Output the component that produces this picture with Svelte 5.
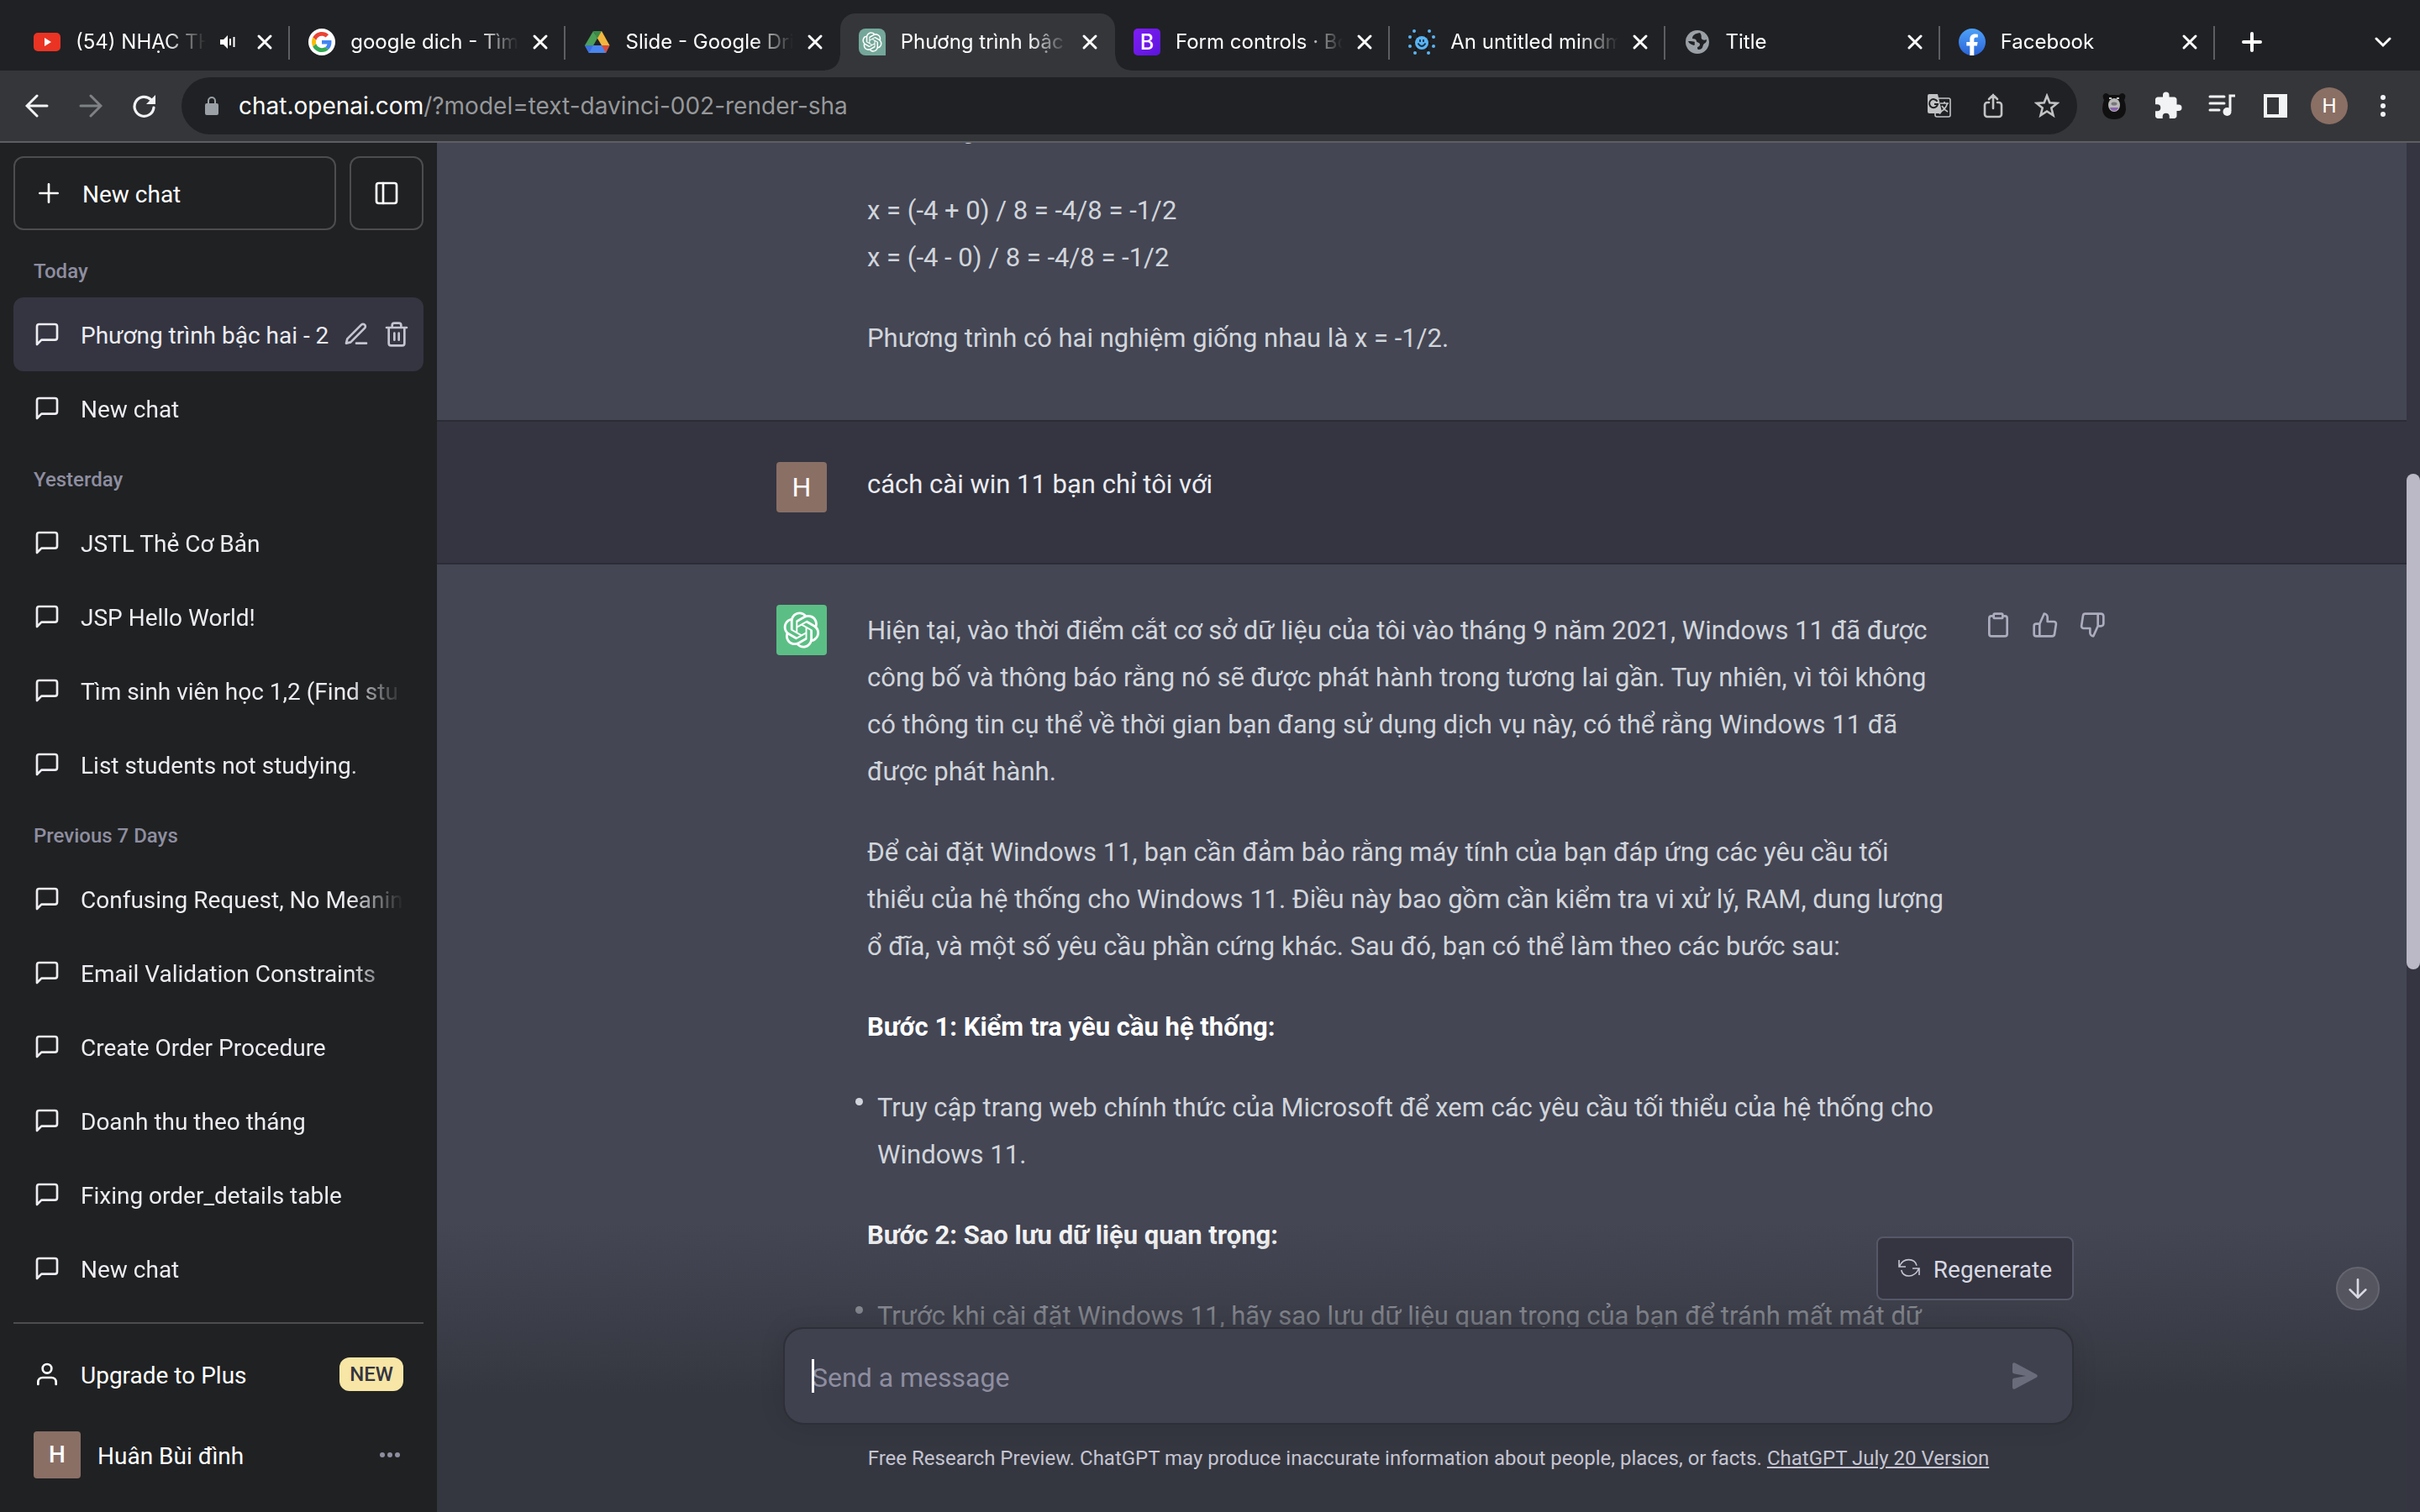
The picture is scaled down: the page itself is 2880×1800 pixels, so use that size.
<script>
  const tabs = [
    { icon: 'youtube', title: '(54) NHẠC TH', audio: true },
    { icon: 'google', title: 'google dich - Tìm' },
    { icon: 'drive', title: 'Slide - Google Dri', flush: true },
    { icon: 'gpt', title: 'Phương trình bậc', active: true },
    { icon: 'bootstrap', title: 'Form controls · Bo' },
    { icon: 'mind', title: 'An untitled mindm' },
    { icon: 'globe', title: 'Title' },
    { icon: 'facebook', title: 'Facebook' },
  ];

  const groups = [
    { label: 'Today', chats: [{ title: 'Phương trình bậc hai - 2', active: true }, { title: 'New chat' }] },
    {
      label: 'Yesterday',
      chats: [
        { title: 'JSTL Thẻ Cơ Bản' },
        { title: 'JSP Hello World!' },
        { title: 'Tìm sinh viên học 1,2 (Find stu' },
        { title: 'List students not studying.' },
      ],
    },
    {
      label: 'Previous 7 Days',
      chats: [
        { title: 'Confusing Request, No Meanin' },
        { title: 'Email Validation Constraints' },
        { title: 'Create Order Procedure' },
        { title: 'Doanh thu theo tháng' },
        { title: 'Fixing order_details table' },
        { title: 'New chat' },
      ],
    },
  ];

  let typedUrl = $state('');
  let draft = $state('');
</script>

{#snippet gptMark()}
  <path d="M37.5324 16.8707C37.9808 15.5241 38.1363 14.0974 37.9886 12.6859C37.8409 11.2744 37.3934 9.91076 36.676 8.68622C35.6126 6.83404 33.9882 5.3676 32.0373 4.4985C30.0864 3.62941 27.9098 3.40259 25.8215 3.85078C24.8796 2.7893 23.7219 1.94125 22.4257 1.36341C21.1295 0.785575 19.7249 0.491269 18.3058 0.500197C16.1708 0.495044 14.0893 1.16803 12.3614 2.42214C10.6335 3.67624 9.34853 5.44666 8.6917 7.47815C7.30085 7.76286 5.98686 8.3414 4.8377 9.17505C3.68854 10.0087 2.73073 11.0782 2.02839 12.312C0.956464 14.1591 0.498905 16.2988 0.721698 18.4228C0.944492 20.5467 1.83612 22.5449 3.268 24.1293C2.81966 25.4759 2.66413 26.9026 2.81182 28.3141C2.95951 29.7256 3.40701 31.0892 4.12437 32.3138C5.18791 34.1659 6.8123 35.6322 8.76321 36.5013C10.7141 37.3704 12.8907 37.5973 14.9789 37.1492C15.9208 38.2107 17.0786 39.0587 18.3747 39.6366C19.6709 40.2144 21.0755 40.5087 22.4946 40.4998C24.6307 40.5054 26.7133 39.8321 28.4418 38.5772C30.1704 37.3223 31.4556 35.5506 32.1119 33.5179C33.5027 33.2332 34.8167 32.6547 35.9659 31.821C37.115 30.9874 38.0728 29.9178 38.7752 28.684C39.8458 26.8371 40.3023 24.6979 40.0789 22.5748C39.8556 20.4517 38.9639 18.4544 37.5324 16.8707ZM22.4978 37.8849C20.7443 37.8874 19.0459 37.2733 17.6994 36.1501C17.7601 36.117 17.8666 36.0586 17.936 36.0161L25.9004 31.4156C26.1003 31.3019 26.2663 31.137 26.3813 30.9378C26.4964 30.7386 26.5563 30.5124 26.5549 30.2825V19.0542L29.9213 20.998C29.9389 21.0068 29.9541 21.0198 29.9656 21.0359C29.977 21.052 29.9842 21.0707 29.9867 21.0902V30.3889C29.9842 32.375 29.1946 34.2791 27.7909 35.6841C26.3872 37.0892 24.4838 37.8806 22.4978 37.8849ZM6.39227 31.0064C5.51397 29.4888 5.19742 27.7107 5.49804 25.9832C5.55718 26.0187 5.66048 26.0818 5.73461 26.1244L13.699 30.7248C13.8975 30.8408 14.1233 30.902 14.3532 30.902C14.583 30.902 14.8088 30.8408 15.0073 30.7248L24.731 25.1103V28.9979C24.7321 29.0177 24.7283 29.0376 24.7199 29.0556C24.7115 29.0736 24.6988 29.0893 24.6829 29.1012L16.6317 33.7497C14.9096 34.7416 12.8643 35.0097 10.9447 34.4954C9.02506 33.9811 7.38785 32.7263 6.39227 31.0064ZM4.29707 13.6194C5.17156 12.0998 6.55279 10.9364 8.19885 10.3327C8.19885 10.4013 8.19491 10.5228 8.19491 10.6071V19.808C8.19351 20.0378 8.25334 20.2638 8.36823 20.4629C8.48312 20.6619 8.64893 20.8267 8.84863 20.9404L18.5723 26.5542L15.206 28.4979C15.1894 28.5089 15.1703 28.5155 15.1505 28.5173C15.1307 28.5191 15.1107 28.516 15.0924 28.5082L7.04046 23.8557C5.32135 22.8601 4.06716 21.2235 3.55289 19.3046C3.03862 17.3858 3.30624 15.3413 4.29707 13.6194ZM31.955 20.0556L22.2312 14.4411L25.5976 12.4981C25.6142 12.4872 25.6333 12.4805 25.6531 12.4787C25.6729 12.4769 25.6928 12.4801 25.7111 12.4879L33.7631 17.1364C34.9967 17.849 36.0017 18.8982 36.6606 20.1613C37.3194 21.4244 37.6047 22.849 37.4832 24.2684C37.3617 25.6878 36.8382 27.0432 35.9743 28.1759C35.1103 29.3086 33.9415 30.1717 32.6047 30.6641C32.6047 30.5947 32.6047 30.4733 32.6047 30.3889V21.188C32.6066 20.9586 32.5474 20.7328 32.4332 20.5338C32.319 20.3348 32.154 20.1698 31.955 20.0556ZM35.3055 15.0128C35.2464 14.9765 35.1431 14.9142 35.069 14.8717L27.1045 10.2712C26.906 10.1554 26.6803 10.0943 26.4504 10.0943C26.2206 10.0943 25.9948 10.1554 25.7963 10.2712L16.0726 15.8858V11.9982C16.0715 11.9783 16.0753 11.9585 16.0837 11.9405C16.0921 11.9225 16.1048 11.9068 16.1207 11.8949L24.1719 7.25025C25.4053 6.53903 26.8158 6.19376 28.2383 6.25482C29.6608 6.31589 31.0364 6.78077 32.2044 7.59508C33.3723 8.40939 34.2842 9.53945 34.8334 10.8531C35.3826 12.1667 35.5464 13.6095 35.3055 15.0128ZM14.2424 21.9419L10.8752 19.9981C10.8576 19.9893 10.8423 19.9763 10.8309 19.9602C10.8195 19.9441 10.8122 19.9254 10.8098 19.9058V10.6071C10.8107 9.18295 11.2173 7.78848 11.9819 6.58696C12.7466 5.38544 13.8377 4.42659 15.1275 3.82264C16.4173 3.21869 17.8524 2.99464 19.2649 3.1767C20.6775 3.35876 22.0089 3.93941 23.1034 4.85067C23.0427 4.88379 22.937 4.94215 22.8668 4.98473L14.9024 9.58517C14.7025 9.69878 14.5366 9.86356 14.4215 10.0626C14.3065 10.2616 14.2466 10.4877 14.2479 10.7175L14.2424 21.9419ZM16.071 17.9991L20.4018 15.4978L24.7325 17.9975V22.9985L20.4018 25.4983L16.071 22.9985V17.9991Z" fill="#fff" />
{/snippet}

{#snippet favicon(name)}
  <svg class="i32" viewBox="0 0 32 32" aria-hidden="true">
    {#if name === 'youtube'}
      <rect y="5" width="32" height="22" rx="5" fill="#ea3323" />
      <path d="M13 11l8 5-8 5z" fill="#fff" />
    {:else if name === 'google'}
      <circle cx="16" cy="16" r="16" fill="#fff" />
      <svg x="4" y="4" width="24" height="24" viewBox="0 0 48 48">
        <path fill="#ea4335" d="M24 9.5c3.54 0 6.71 1.22 9.21 3.6l6.85-6.85C35.9 2.38 30.47 0 24 0 14.62 0 6.51 5.38 2.56 13.22l7.98 6.19C12.43 13.72 17.74 9.5 24 9.5z" />
        <path fill="#4285f4" d="M46.98 24.55c0-1.57-.15-3.09-.38-4.55H24v9.02h12.94c-.58 2.96-2.26 5.48-4.78 7.18l7.73 6c4.51-4.18 7.09-10.36 7.09-17.65z" />
        <path fill="#fbbc05" d="M10.53 28.59c-.48-1.45-.76-2.99-.76-4.59s.27-3.14.76-4.59l-7.98-6.19C.92 16.46 0 20.12 0 24c0 3.88.92 7.54 2.56 10.78l7.97-6.19z" />
        <path fill="#34a853" d="M24 48c6.48 0 11.93-2.13 15.89-5.81l-7.73-6c-2.15 1.45-4.92 2.3-8.16 2.3-6.26 0-11.57-4.22-13.47-9.91l-7.98 6.19C6.51 42.62 14.62 48 24 48z" />
      </svg>
    {:else if name === 'drive'}
      <path fill="#f2b73f" d="M16 3h5l9.500 17H21L13.500 7.500z" />
      <path fill="#4b9f57" d="M11 3l5 8.500L6 29l-5-9z" />
      <path fill="#3a8a46" d="M11 3h10l-5 8.500z" />
      <path fill="#4a86ee" d="M1 20h29.500L26 29H6z" />
      <path fill="#3b6fe0" d="M1 20h10l-5 9z" />
      <path fill="#d94b3a" d="M21 20h9.500L26 29z" />
    {:else if name === 'gpt'}
      <path d="M8 0h16a8 8 0 0 1 8 8v24H8a8 8 0 0 1-8-8V8a8 8 0 0 1 8-8z" fill="#74a799" />
      <svg x="4" y="4" width="24" height="24" viewBox="0 0 41 41">{@render gptMark()}</svg>
    {:else if name === 'bootstrap'}
      <defs><linearGradient id="bs" x1="0" y1="0" x2="1" y2="1"><stop offset="0" stop-color="#7f1df5" /><stop offset="1" stop-color="#5b14dc" /></linearGradient></defs>
      <rect width="32" height="32" rx="5" fill="url(#bs)" />
      <text x="16" y="25" text-anchor="middle" font-family="Inter, sans-serif" font-size="25" font-weight="500" fill="#fff">B</text>
    {:else if name === 'mind'}
      <g stroke="#111" fill="none"><path d="M7 3q5 4 5 9M25 3q-5 4-5 9M2 9q6 5 8 6M30 9q-6 5-8 6M2 21q5-5 8-4M30 21q-5-5-8-4M8 29q2-8 4-9M24 29q-2-8-4-9" /></g>
      <g fill="#5ab4f3">
        <circle cx="16" cy="17" r="8" /><circle cx="7" cy="3" r="2" /><circle cx="25" cy="3" r="2" /><circle cx="2" cy="10" r="2" /><circle cx="30" cy="10" r="2" /><circle cx="2" cy="21" r="2" /><circle cx="30" cy="21" r="2" /><circle cx="8" cy="29" r="2" /><circle cx="24" cy="29" r="2" />
      </g>
      <path d="M14 13v3M18 13v3M11.500 17.500q4.500 7 9 0" stroke="#16324a" stroke-width="1.800" fill="none" />
    {:else if name === 'globe'}
      <circle cx="16" cy="16" r="14" fill="#9aa0a6" />
      <path d="M19 5c-6 1-9 3-9 7 3 0 5 1 5 3s4 1 4 4-3 2-3 4c0 3 3 2 5 1 2-2 1-4 3-6 2-1 3-2 3-5-2 1-5 1-6-1s1-3-2-7zM5 15c4 0 6 0 8 1-1 2 1 3-1 4-3-1-6-2-7-5z" fill="#202124" />
    {:else}
      <defs><linearGradient id="fb" x1="0" y1="0" x2="0" y2="1"><stop offset="0" stop-color="#4ea2f8" /><stop offset="1" stop-color="#2a63d8" /></linearGradient></defs>
      <circle cx="16" cy="16" r="16" fill="url(#fb)" />
      <path d="M13.300 32V20.600H9.300V16h4v-3.400c0-4 2.400-6.200 6-6.200 1.700 0 3.500.3 3.500.3v3.900h-2c-2 0-2.500 1.200-2.500 2.400v3h4.300l-.7 4.600h-3.600V32z" fill="#fff" />
    {/if}
  </svg>
{/snippet}

{#snippet cross()}
  <svg class="i20" viewBox="0 0 20 20" aria-hidden="true"><path d="M3 3l14 14M17 3L3 17" stroke="#fff" stroke-width="3" stroke-linecap="round" /></svg>
{/snippet}

<div class="window">
  <header class="browser">
    <div class="strip">
      <div class="tabs">
        {#each tabs as tab}
          <div class="tab" class:active={tab.active} class:flush={tab.flush}>
            {@render favicon(tab.icon)}
            <span class="tab-title">{tab.title}</span>
            {#if tab.audio}
              <svg class="i20 speaker" viewBox="0 0 20 20" aria-hidden="true"><path d="M1 7h4l5-5v16l-5-5H1z" fill="#fff" /><path d="M13 6v8M17.500 4v12" stroke="#fff" stroke-width="2" /></svg>
            {/if}
            <button class="plain" aria-label="Close tab">{@render cross()}</button>
          </div>
        {/each}
      </div>
      <div class="strip-end">
        <button class="plain" aria-label="New tab">
          <svg class="i24" viewBox="0 0 24 24"><path d="M12 2v20M2 12h20" stroke="#fff" stroke-width="4" stroke-linecap="round" /></svg>
        </button>
        <button class="plain" aria-label="Search tabs">
          <svg class="i20" viewBox="0 0 20 20"><path d="M2 6l8 8 8-8" fill="none" stroke="#fff" stroke-width="3" stroke-linecap="round" /></svg>
        </button>
      </div>
    </div>

    <div class="toolbar">
      <div class="slots">
        <button class="plain slot" aria-label="Back"><svg class="i28" viewBox="0 0 28 28"><path d="M26 14H3M14 2L2 14l12 12" fill="none" stroke="#f1f3f4" stroke-width="3" stroke-linecap="round" /></svg></button>
        <button class="plain slot" aria-label="Forward"><svg class="i28" viewBox="0 0 28 28"><path d="M2 14h23M14 2l12 12-12 12" fill="none" stroke="#7f8184" stroke-width="3" stroke-linecap="round" /></svg></button>
        <button class="plain slot" aria-label="Reload"><svg class="i28" viewBox="0 0 28 28"><path d="M25 16a11.500 11.500 0 1 1-3.500-9.500" fill="none" stroke="#f1f3f4" stroke-width="3.200" stroke-linecap="round" /><path d="M27 1v11H16z" fill="#f1f3f4" /></svg></button>
      </div>
      <div class="omnibox">
        <svg class="i24" viewBox="0 0 24 24" aria-hidden="true"><rect x="4" y="9" width="16" height="14" rx="2" fill="#9aa0a6" /><path d="M8 10V6a4 4 0 0 1 8 0v4" fill="none" stroke="#9aa0a6" stroke-width="2" /></svg>
        <div class="address">
          <label for="address">{#if !typedUrl}chat.openai.com<span class="path">/?model=text-davinci-002-render-sha</span>{/if}</label>
          <input id="address" bind:value={typedUrl} />
        </div>
        <div class="slots">
          <button class="plain slot" aria-label="Translate">
            <svg class="i28" viewBox="0 0 28 28">
              <rect x="9" y="5" width="18" height="22" rx="2" fill="none" stroke="#c2c3c4" stroke-width="1.600" />
              <path d="M2 0h10l5 21-2 3-2-1H2a2 2 0 0 1-2-2V2a2 2 0 0 1 2-2z" fill="#c2c3c4" />
              <path d="M11.500 8.800A5 5 0 1 0 12 12H8" fill="none" stroke="#202124" stroke-width="2" />
              <path d="M15 11h10M20 9v2M23.500 11q-2 7-8 10M17 14q3 5 7 7" fill="none" stroke="#c2c3c4" stroke-width="1.700" />
            </svg>
          </button>
          <button class="plain slot" aria-label="Share"><svg class="i30" viewBox="0 0 30 30"><path d="M10 11H8a3 3 0 0 0-3 3v11a3 3 0 0 0 3 3h14a3 3 0 0 0 3-3V14a3 3 0 0 0-3-3h-2M15 18V2M10 7l5-5 5 5" fill="none" stroke="#c2c3c4" stroke-width="2.600" stroke-linecap="round" /></svg></button>
          <button class="plain slot" aria-label="Bookmark"><svg class="i30" viewBox="0 0 30 30"><path d="M15 3l3.300 8.300 8.900.6-6.900 5.700 2.200 8.700L15 21.500l-7.500 4.800 2.200-8.700-6.900-5.700 8.900-.6z" fill="none" stroke="#c2c3c4" stroke-width="2.600" /></svg></button>
        </div>
      </div>
      <div class="slots">
        <button class="plain slot" aria-label="Bear extension">
          <svg class="i32" viewBox="0 0 32 32"><path d="M3 3q3-4 7 0h12q4-4 7 0 1 3-1 6 2 5 2 11-1 12-14 12T2 20Q2 14 4 9 2 6 3 3z" fill="#101010" /><ellipse cx="16" cy="15" rx="7" ry="8" fill="#b9b9b9" /><path d="M11 18h10q-1 4-5 4t-5-4z" fill="#8a63b0" /><ellipse cx="16" cy="13.500" rx="3.500" ry="2" fill="#777" /><path d="M10 7h3M19 7h3" stroke="#fff" stroke-width="1.500" /></svg>
        </button>
        <button class="plain slot" aria-label="Extensions"><svg class="i36" viewBox="0 0 24 24"><path d="M20.500 11H19V7c0-1.100-.9-2-2-2h-4V3.500a2.500 2.500 0 0 0-5 0V5H4c-1.100 0-2 .9-2 2v3.800h1.500a2.700 2.700 0 0 1 0 5.400H2V20c0 1.100.9 2 2 2h3.800v-1.500a2.700 2.700 0 0 1 5.400 0V22H17c1.100 0 2-.9 2-2v-4h1.500a2.500 2.500 0 0 0 0-5z" fill="#f1f3f4" /></svg></button>
        <button class="plain slot" aria-label="Media controls"><svg class="i32" viewBox="0 0 32 32"><path d="M2 5h17M2 13h17M2 21h11" stroke="#f1f3f4" stroke-width="3" stroke-linecap="round" /><path d="M32 4h-6v18" fill="none" stroke="#f1f3f4" stroke-width="3" /><circle cx="22.500" cy="23" r="5" fill="#f1f3f4" /></svg></button>
        <button class="plain slot" aria-label="Side panel"><svg class="i28" viewBox="0 0 28 28"><path d="M0 0h28v28H0zM4 4v20h14V4z" fill="#f1f3f4" fill-rule="evenodd" /></svg></button>
        <button class="plain slot" aria-label="Profile"><span class="profile">H</span></button>
        <button class="plain slot" aria-label="Browser menu"><svg class="i28" viewBox="0 0 28 28"><g fill="#f1f3f4"><circle cx="14" cy="4" r="3" /><circle cx="14" cy="14" r="3" /><circle cx="14" cy="24" r="3" /></g></svg></button>
      </div>
    </div>
  </header>

  <div class="app">
    <aside class="sidebar">
      <div class="side-top">
        <button class="outlined new-chat">
          <svg class="i32 line" viewBox="0 0 24 24" aria-hidden="true"><path d="M12 4v16M4 12h16" /></svg>
          <span class="label">New chat</span>
        </button>
        <button class="outlined toggle" aria-label="Hide sidebar">
          <svg class="i32 line" viewBox="0 0 24 24"><rect x="3" y="3" width="18" height="18" rx="2" /><path d="M9 3v18" /></svg>
        </button>
      </div>

      <nav class="history" aria-label="Chat history">
        {#each groups as group}
          <h3>{group.label}</h3>
          {#each group.chats as chat}
            <div class="chat" class:active={chat.active}>
              <svg class="i32 line" viewBox="0 0 24 24" aria-hidden="true"><path d="M21 15a2 2 0 0 1-2 2H7l-4 4V5a2 2 0 0 1 2-2h14a2 2 0 0 1 2 2z" /></svg>
              <a class="label" href="#chat">{chat.title}</a>
              {#if chat.active}
                <div class="chat-tools">
                  <button class="plain" aria-label="Rename chat"><svg class="i32 line" viewBox="0 0 24 24"><path d="M12 20h9M16.500 3.500a2.121 2.121 0 0 1 3 3L7 19l-4 1 1-4L16.500 3.500z" /></svg></button>
                  <button class="plain" aria-label="Delete chat"><svg class="i32 line" viewBox="0 0 24 24"><path d="M3 6h18M19 6v14a2 2 0 0 1-2 2H7a2 2 0 0 1-2-2V6m3 0V4a2 2 0 0 1 2-2h4a2 2 0 0 1 2 2v2M10 11v6M14 11v6" /></svg></button>
                </div>
              {/if}
            </div>
          {/each}
        {/each}
      </nav>

      <div class="side-bottom">
        <a class="upgrade" href="#upgrade">
          <svg class="i32 line" viewBox="0 0 24 24" aria-hidden="true"><path d="M20 21v-2a4 4 0 0 0-4-4H8a4 4 0 0 0-4 4v2" /><circle cx="12" cy="7" r="4" /></svg>
          <span class="label grow">Upgrade to Plus</span>
          <span class="badge">NEW</span>
        </a>
        <button class="plain account">
          <span class="avatar small">H</span>
          <span class="label grow">Huân Bùi đình</span>
          <svg class="i24 dots" viewBox="0 0 24 24" aria-hidden="true"><g fill="#8e8ea0"><circle cx="3" cy="12" r="3" /><circle cx="12" cy="12" r="3" /><circle cx="21" cy="12" r="3" /></g></svg>
        </button>
      </div>
    </aside>

    <main>
      <div class="thread">
        <article class="row assistant">
          <div class="inner">
            <span></span>
            <div class="text">
              <p>Có hai nghiệm là:</p>
              <p>x = (-4 + 0) / 8 = -4/8 = -1/2<br />x = (-4 - 0) / 8 = -4/8 = -1/2</p>
              <p>Phương trình có hai nghiệm giống nhau là x = -1/2.</p>
            </div>
          </div>
        </article>

        <article class="row user">
          <div class="inner">
            <span class="avatar">H</span>
            <div class="text"><p>cách cài win 11 bạn chỉ tôi với</p></div>
          </div>
        </article>

        <article class="row assistant">
          <div class="inner">
            <span class="avatar bot"><svg class="i44" viewBox="0 0 41 41" aria-hidden="true">{@render gptMark()}</svg></span>
            <div class="text">
              <p>Hiện tại, vào thời điểm cắt cơ sở dữ liệu của tôi vào tháng 9 năm 2021, Windows 11 đã được công bố và thông báo rằng nó sẽ được phát hành trong tương lai gần. Tuy nhiên, vì tôi không có thông tin cụ thể về thời gian bạn đang sử dụng dịch vụ này, có thể rằng Windows 11 đã được phát hành.</p>
              <p>Để cài đặt Windows 11, bạn cần đảm bảo rằng máy tính của bạn đáp ứng các yêu cầu tối thiểu của hệ thống cho Windows 11. Điều này bao gồm cần kiểm tra vi xử lý, RAM, dung lượng ổ đĩa, và một số yêu cầu phần cứng khác. Sau đó, bạn có thể làm theo các bước sau:</p>
              <p><strong>Bước 1: Kiểm tra yêu cầu hệ thống:</strong></p>
              <ul><li><span>Truy cập trang web chính thức của Microsoft để xem các yêu cầu tối thiểu của hệ thống cho Windows 11.</span></li></ul>
              <p><strong>Bước 2: Sao lưu dữ liệu quan trọng:</strong></p>
              <ul><li><span>Trước khi cài đặt Windows 11, hãy sao lưu dữ liệu quan trọng của bạn để tránh mất mát dữ liệu.</span></li></ul>
            </div>
            <div class="feedback">
              <button class="plain" aria-label="Copy"><svg class="i32 line" viewBox="0 0 24 24"><path d="M16 4h2a2 2 0 0 1 2 2v14a2 2 0 0 1-2 2H6a2 2 0 0 1-2-2V6a2 2 0 0 1 2-2h2" /><rect x="8" y="2" width="8" height="4" rx="1" /></svg></button>
              <button class="plain" aria-label="Good response"><svg class="i32 line" viewBox="0 0 24 24"><path d="M14 9V5a3 3 0 0 0-3-3l-4 9v11h11.280a2 2 0 0 0 2-1.700l1.380-9a2 2 0 0 0-2-2.300zM7 22H4a2 2 0 0 1-2-2v-7a2 2 0 0 1 2-2h3" /></svg></button>
              <button class="plain" aria-label="Bad response"><svg class="i32 line" viewBox="0 0 24 24"><path d="M10 15v4a3 3 0 0 0 3 3l4-9V2H5.720a2 2 0 0 0-2 1.700l-1.380 9a2 2 0 0 0 2 2.300zm7-13h2.670A2.310 2.310 0 0 1 22 4v7a2.310 2.310 0 0 1-2.330 2H17" /></svg></button>
            </div>
          </div>
        </article>
      </div>

      <div class="dock">
        <div class="dock-inner">
          <button class="regenerate">
            <svg class="i26" viewBox="0 0 26 26" aria-hidden="true"><path d="M1 3v8h8M1.500 10.500C4 5 8 2.600 12.500 2.600c5 0 8.500 3 9.500 7M25 21v-8h-8M24.500 13.500C21.500 19.500 17 22 12.700 22 8 22 4.700 19 3.700 15" fill="none" stroke="#c5c5d2" stroke-width="1.600" /></svg>
            <span class="label">Regenerate</span>
          </button>
          <form class="composer">
            <textarea rows="1" placeholder="Send a message" aria-label="Send a message" bind:value={draft}></textarea>
            <span class="caret"></span>
            <button class="plain" type="button" aria-label="Send"><svg class="i32" viewBox="0 0 16 16"><path d="M.5 1.163A1 1 0 0 1 1.970.28l12.868 6.837a1 1 0 0 1 0 1.766L1.969 15.720A1 1 0 0 1 .5 14.836V10.330a1 1 0 0 1 .816-.983L8.500 8 1.316 6.653A1 1 0 0 1 .5 5.670V1.163Z" fill="#6b6c7b" /></svg></button>
          </form>
          <p class="notice">Free Research Preview. ChatGPT may produce inaccurate information about people, places, or facts. <a href="#release">ChatGPT July 20 Version</a></p>
        </div>
      </div>

      <button class="to-bottom" aria-label="Scroll to bottom"><svg class="i32 line" viewBox="0 0 24 24"><path d="M12 4v16M19 13l-7 7-7-7" /></svg></button>
      <div class="scrollbar"><div class="thumb"></div></div>
    </main>
  </div>
</div>

<style>
  :global(body) { margin: 0; background: #343541; }
  * { box-sizing: border-box; }
  button, input, textarea { font: inherit; color: inherit; }
  svg { display: block; flex: none; }
  a { color: inherit; text-decoration: none; }
  .i20 { width: 20px; height: 20px; }
  .i24 { width: 24px; height: 24px; }
  .i26 { width: 26px; height: 26px; }
  .i28 { width: 28px; height: 28px; }
  .i30 { width: 30px; height: 30px; }
  .i32 { width: 32px; height: 32px; }
  .i36 { width: 36px; height: 36px; }
  .i44 { width: 44px; height: 44px; }
  .line { fill: none; stroke: currentColor; stroke-width: 2; stroke-linecap: round; stroke-linejoin: round; }
  .plain { display: flex; align-items: center; justify-content: center; padding: 0; border: 0; background: none; }
  .label { padding-top: 4px; }
  .grow { flex: 1; text-align: left; }

  .window { display: flex; flex-direction: column; height: 100vh; overflow: hidden; font: 28px/40px Roboto, "Liberation Sans", sans-serif; color: #fff; }

  .browser { flex: none; border-bottom: 2px solid #5d5e62; background: #35363a; font: 24px/32px Inter, sans-serif; }
  .strip { display: flex; height: 84px; padding-top: 16px; background: #202124; }
  .tabs { display: flex; flex: 1; min-width: 0; padding-left: 18px; }
  .tab { position: relative; display: flex; flex: 1; align-items: center; min-width: 0; padding: 0 20px 0 22px; }
  .tab::after { content: ""; position: absolute; right: 0; top: 15px; width: 2px; height: 40px; background: #5d5e62; }
  .tab.flush::after { display: none; }
  .tab.active { border-radius: 18px 18px 0 0; background: #35363a; }
  .tab.active::before, .tab.active::after { content: ""; position: absolute; top: auto; bottom: 0; width: 18px; height: 18px; }
  .tab.active::before { left: -18px; background: radial-gradient(circle at 0 0, transparent 17px, #35363a 18px); }
  .tab.active::after { right: -18px; background: radial-gradient(circle at 100% 0, transparent 17px, #35363a 18px); }
  .tab-title { flex: 1; min-width: 0; margin: 0 16px 0 18px; overflow: hidden; white-space: nowrap; -webkit-mask-image: linear-gradient(90deg, #000 calc(100% - 48px), transparent); mask-image: linear-gradient(90deg, #000 calc(100% - 48px), transparent); }
  .speaker { margin-right: 24px; }
  .strip-end { display: flex; flex: none; align-items: center; justify-content: space-between; width: 244px; padding: 0 34px 0 32px; }

  .toolbar { display: flex; align-items: center; gap: 12px; height: 84px; padding: 0 12px; }
  .slots { display: flex; flex: none; }
  .slot { width: 64px; height: 64px; }
  .omnibox { display: flex; flex: 1; align-items: center; gap: 20px; height: 68px; padding: 0 4px 0 24px; border-radius: 34px; background: #202124; font-size: 28px; }
  .address { display: grid; flex: 1; min-width: 0; }
  .address label, .address input { grid-area: 1 / 1; min-width: 0; white-space: nowrap; }
  .address input { padding: 0; border: 0; outline: 0; background: none; }
  .path { color: #96989b; }
  .profile { width: 44px; border-radius: 22px; background: #8a6f65; color: #fff; font: 24px/44px Roboto, sans-serif; text-align: center; }

  .app { display: flex; flex: 1; min-height: 0; }
  .sidebar { display: flex; flex: none; flex-direction: column; width: 520px; padding: 16px; background: #202123; }
  .side-top { display: flex; gap: 16px; margin-bottom: 8px; }
  .outlined { display: flex; align-items: center; gap: 24px; height: 88px; padding: 0 24px; border: 2px solid #4d4d4f; border-radius: 12px; background: none; }
  .new-chat { flex: 1; }
  .toggle { justify-content: center; width: 88px; }
  .history { flex: 1; min-height: 0; overflow: hidden; color: #ececf1; }
  h3 { margin: 0; padding: 25px 24px 15px; color: #8e8ea0; font-size: 24px; font-weight: 500; line-height: 32px; }
  .chat { display: flex; align-items: center; gap: 24px; height: 88px; padding: 0 24px; border-radius: 12px; }
  .chat a { flex: 1; min-width: 0; overflow: hidden; white-space: nowrap; -webkit-mask-image: linear-gradient(90deg, #000 calc(100% - 64px), transparent); mask-image: linear-gradient(90deg, #000 calc(100% - 64px), transparent); }
  .chat.active { gap: 16px; padding-right: 16px; background: #343541; }
  .chat.active a { margin-left: 8px; -webkit-mask-image: none; mask-image: none; }
  .chat-tools { display: flex; gap: 16px; color: #c5c5d2; }
  .side-bottom { border-top: 2px solid #4d4d4f; padding-top: 16px; }
  .upgrade { display: flex; align-items: center; gap: 24px; height: 88px; padding: 0 24px; }
  .badge { padding: 4px 12px; border-radius: 12px; background: #f7e6a5; color: #343541; font-size: 24px; font-weight: 500; line-height: 32px; }
  .account { gap: 20px; width: 100%; height: 104px; padding: 0 28px 0 24px; }
  .avatar { width: 60px; height: 60px; border-radius: 4px; background: #8a6f65; color: #fff; font-size: 32px; line-height: 60px; text-align: center; }
  .avatar.small { width: 56px; height: 56px; font-size: 28px; font-weight: 500; line-height: 56px; }
  .avatar.bot { display: flex; align-items: center; justify-content: center; background: #5bbf85; }

  main { position: relative; flex: 1; min-width: 0; overflow: hidden; padding-right: 16px; background: #343541; }
  .thread { margin-top: -94px; font-size: 31px; line-height: 56px; }
  .row { padding: 48px 0; border-bottom: 2px solid #2b2c34; }
  .assistant { background: #444654; color: #d1d5db; }
  .user { color: #ececf1; line-height: 48px; }
  .inner { display: grid; grid-template-columns: 60px 1fr 98px; max-width: 1536px; margin: 0 auto; }
  .text { display: flex; flex-direction: column; gap: 40px; padding: 3px 44px 21px 48px; }
  .text p, .text ul { margin: 0; }
  .text ul { padding: 0; margin-left: -14px; list-style: none; }
  .text li { display: flex; gap: 17px; }
  .text li::before { content: ""; flex: none; width: 9px; height: 9px; margin-top: 16px; border-radius: 50%; background: currentColor; }
  strong { color: #fff; font-weight: 700; }
  .feedback { display: flex; gap: 24px; height: 48px; align-items: center; color: #acacbe; }

  .dock { position: absolute; left: 0; right: 0; bottom: 0; padding: 16px 0 48px; background: linear-gradient(180deg, rgba(53, 55, 64, 0), #353740 59%); }
  .dock-inner { display: flex; flex-direction: column; align-items: flex-end; max-width: 1536px; margin: 0 auto; }
  .regenerate { display: flex; align-items: center; gap: 16px; height: 76px; padding: 0 24px; border: 2px solid #565869; border-radius: 8px; background: #343541; color: #d9d9e3; }
  .composer { position: relative; display: flex; align-items: center; width: 100%; margin: 32px 0 24px; padding: 32px 40px 32px 32px; border: 2px solid #2e2f37; border-radius: 24px; background: #40414f; box-shadow: 0 0 30px rgba(0, 0, 0, 0.1); background-clip: padding-box; }
  textarea { display: block; flex: 1; height: 48px; padding: 4px 0 0; border: 0; outline: 0; resize: none; overflow: hidden; background: none; font-size: 32px; line-height: 44px; }
  textarea::placeholder { color: #8e8ea0; opacity: 1; }
  .caret { position: absolute; left: 32px; top: 36px; width: 3px; height: 40px; background: #fff; }
  .notice { align-self: center; margin: 0; color: #c5c5d2; font-size: 24px; line-height: 32px; }
  .notice a { text-decoration: underline; }
  .to-bottom { position: absolute; right: 48px; bottom: 240px; display: flex; align-items: center; justify-content: center; width: 52px; height: 52px; padding: 0; border: 2px solid #64656f; border-radius: 50%; background: #54555f; color: #d9d9e3; }
  .scrollbar { position: absolute; top: 0; right: 0; bottom: 0; width: 16px; padding-top: 394px; background: #343541; }
  .thumb { height: 590px; border-radius: 8px; background: #bbb9c5; }
</style>
